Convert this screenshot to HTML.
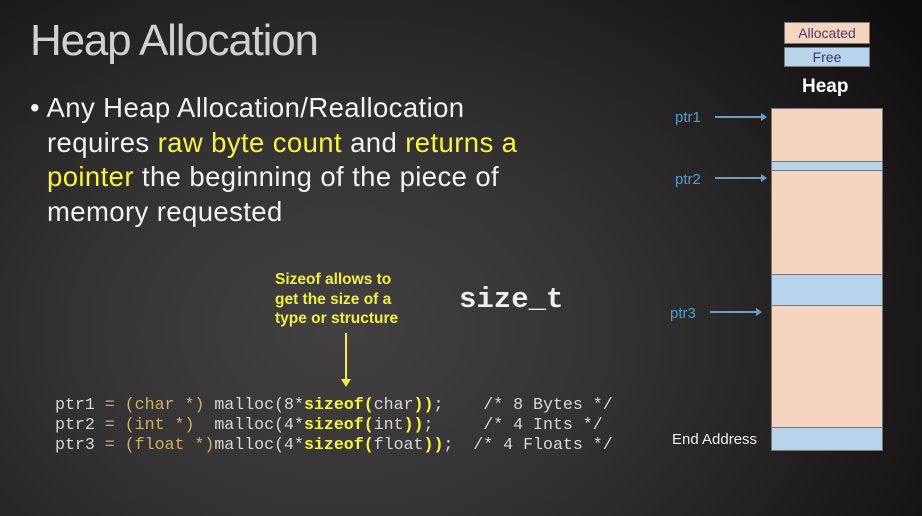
<!DOCTYPE html>
<html><head><meta charset="utf-8"><style>
*{margin:0;padding:0}
body{width:922px;height:516px;overflow:hidden;position:relative;font-family:"Liberation Sans",sans-serif;
background:radial-gradient(ellipse 700px 520px at 340px 330px,#424040 0%,#333132 40%,#1e1c1d 75%,#0f0d0e 100%);}
.a{position:absolute;white-space:nowrap}
.title{left:30px;top:16px;font-size:44px;color:#d0d0d0;letter-spacing:-1.2px}
.bul{left:30px;top:91px;font-size:27.5px;line-height:34.5px;color:#f2f2f2;letter-spacing:0.4px}
.y{color:#f4f542}
.note{left:275px;top:270px;font-size:15.5px;line-height:19.5px;color:#f0f040;font-weight:bold}
.sz{left:459px;top:283px;font-family:"Liberation Mono",monospace;font-weight:bold;font-size:29px;color:#eee}
pre{position:absolute;left:55px;top:395px;font-family:"Liberation Mono",monospace;font-size:16.6px;line-height:20px;color:#d8d8d8}
.t{color:#c9b36a}.k{color:#f4f542;font-weight:bold}
.box{position:absolute;box-sizing:border-box;border:1px solid #777}
.al{background:#f5d5c0}.fr{background:#b8d3ec}
.p{position:absolute;color:#4e9fd0;font-size:15px}
.arr{position:absolute;height:2px;background:#6a9cc8}
.arr:after{content:"";position:absolute;right:-2px;top:-3px;border-left:6px solid #6a9cc8;border-top:4px solid transparent;border-bottom:4px solid transparent}
</style></head><body>
<div class="a title">Heap Allocation</div>
<div class="a bul"><span style="margin-right:0px">•</span> Any Heap Allocation/Reallocation<br>
<span style="padding-left:17px">requires <span class="y">raw byte count</span> and <span class="y">returns a</span></span><br>
<span style="padding-left:17px"><span class="y">pointer</span> the beginning of the piece of</span><br>
<span style="padding-left:17px">memory requested</span></div>
<div class="a note">Sizeof allows to<br>get the size of a<br>type or structure</div>
<div class="a" style="left:345px;top:333px;width:2px;height:50px;background:#f0f040"></div>
<div class="a" style="left:341px;top:379px;border-top:8px solid #f0f040;border-left:5px solid transparent;border-right:5px solid transparent"></div>
<div class="a sz">size_t</div>
<pre>ptr1 <span class="t">= (char *)</span> malloc(8*<span class="k">sizeof(</span>char<span class="k">))</span>;    /* 8 Bytes */
ptr2 <span class="t">= (int *)</span>  malloc(4*<span class="k">sizeof(</span>int<span class="k">))</span>;     /* 4 Ints */
ptr3 <span class="t">= (float *)</span>malloc(4*<span class="k">sizeof(</span>float<span class="k">))</span>;  /* 4 Floats */</pre>
<div class="box al" style="left:784px;top:22px;width:86px;height:22px;text-align:center;color:#4a3a6a;font-size:14px;line-height:20px">Allocated</div>
<div class="box fr" style="left:784px;top:47px;width:86px;height:20px;text-align:center;color:#3a3a6a;font-size:14px;line-height:19px">Free</div>
<div class="a" style="left:802px;top:76px;font-size:19px;font-weight:bold;color:#fff">Heap</div>
<div class="box al" style="left:771px;top:108px;width:112px;height:54px"></div>
<div class="box fr" style="left:771px;top:161px;width:112px;height:10px"></div>
<div class="box al" style="left:771px;top:170px;width:112px;height:105px"></div>
<div class="box fr" style="left:771px;top:274px;width:112px;height:32px"></div>
<div class="box al" style="left:771px;top:305px;width:112px;height:123px"></div>
<div class="box fr" style="left:771px;top:427px;width:112px;height:24px"></div>
<div class="p" style="left:675px;top:109px">ptr1</div><div class="arr" style="left:715px;top:116px;width:50px"></div>
<div class="p" style="left:675px;top:171px">ptr2</div><div class="arr" style="left:715px;top:177px;width:50px"></div>
<div class="p" style="left:670px;top:305px">ptr3</div><div class="arr" style="left:710px;top:311px;width:50px"></div>
<div class="a" style="left:672px;top:431px;font-size:15px;color:#eee">End Address</div>
</body></html>
